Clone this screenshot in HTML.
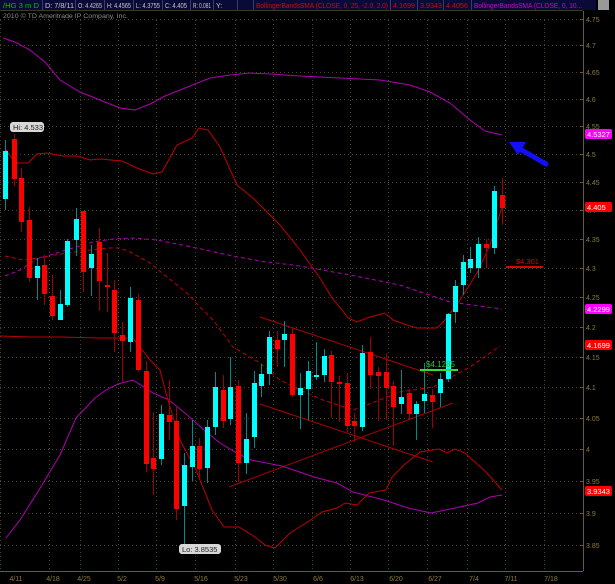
<!DOCTYPE html>
<html><head><meta charset="utf-8"><style>
html,body{margin:0;padding:0;background:#000;width:615px;height:584px;overflow:hidden}
svg{display:block}
text{font-family:"Liberation Sans",sans-serif}
</style></head><body>
<svg id="s" width="615" height="584" viewBox="0 0 615 584" xmlns="http://www.w3.org/2000/svg">
<rect width="615" height="584" fill="#000"/>
<!-- header -->
<rect x="0" y="0" width="596" height="10" fill="#0a0a38"/>
<line x1="0" y1="10.5" x2="583" y2="10.5" stroke="#3a3a20"/>
<g font-size="7">
<text x="3" y="8" fill="#00c000" textLength="36" lengthAdjust="spacingAndGlyphs">/HG 3 m D</text>
<text x="45" y="8" fill="#c8c8c8" textLength="29" lengthAdjust="spacingAndGlyphs">D: 7/8/11</text>
<text x="78" y="8" fill="#c8c8c8" textLength="24" lengthAdjust="spacingAndGlyphs">O: 4.4265</text>
<text x="107" y="8" fill="#c8c8c8" textLength="24" lengthAdjust="spacingAndGlyphs">H: 4.4565</text>
<text x="136" y="8" fill="#c8c8c8" textLength="24" lengthAdjust="spacingAndGlyphs">L: 4.3755</text>
<text x="165" y="8" fill="#c8c8c8" textLength="22" lengthAdjust="spacingAndGlyphs">C: 4.405</text>
<text x="193" y="8" fill="#c8c8c8" textLength="18" lengthAdjust="spacingAndGlyphs">R: 0.081</text>
<text x="216" y="8" fill="#c8c8c8">Y:</text>
<text x="256" y="8" fill="#e00000" textLength="132" lengthAdjust="spacingAndGlyphs">BollingerBandsSMA (CLOSE, 0, 25, -2.0, 2.0)</text>
<text x="393" y="8" fill="#e00000" textLength="22" lengthAdjust="spacingAndGlyphs">4.1699</text>
<text x="420" y="8" fill="#e00000" textLength="22" lengthAdjust="spacingAndGlyphs">3.9343</text>
<text x="446" y="8" fill="#e00000" textLength="22" lengthAdjust="spacingAndGlyphs">4.4056</text>
<text x="474" y="8" fill="#d000d0" textLength="108" lengthAdjust="spacingAndGlyphs">BollingerBandsSMA (CLOSE, 0, 10...</text>
</g>
<g stroke="#3a3a70" stroke-width="1">
<line x1="42.5" y1="0" x2="42.5" y2="10"/><line x1="75.5" y1="0" x2="75.5" y2="10"/><line x1="104.5" y1="0" x2="104.5" y2="10"/><line x1="133.5" y1="0" x2="133.5" y2="10"/><line x1="162.5" y1="0" x2="162.5" y2="10"/><line x1="190.5" y1="0" x2="190.5" y2="10"/><line x1="213.5" y1="0" x2="213.5" y2="10"/><line x1="237.5" y1="0" x2="237.5" y2="10"/><line x1="253.5" y1="0" x2="253.5" y2="10"/><line x1="390.5" y1="0" x2="390.5" y2="10"/><line x1="417.5" y1="0" x2="417.5" y2="10"/><line x1="443.5" y1="0" x2="443.5" y2="10"/><line x1="471.5" y1="0" x2="471.5" y2="10"/>
</g>
<rect x="598" y="0" width="11" height="10" fill="#999"/>
<text x="3" y="18" font-size="6.5" fill="#8a8a8a" textLength="125" lengthAdjust="spacingAndGlyphs">2010 © TD Ameritrade IP Company, Inc.</text>
<g id="grid" stroke="#4a4220" stroke-width="1" stroke-dasharray="1,3"></g>
<!-- axes -->
<line x1="583.5" y1="11" x2="583.5" y2="571" stroke="#6b5a2a"/>
<line x1="0" y1="571.5" x2="583" y2="571.5" stroke="#6b5a2a"/>
<g id="ylab" font-size="7" fill="#8a7a40"></g>
<g font-size="7" fill="#8a7a40" text-anchor="middle">
<text x="16" y="581">4/11</text><text x="53" y="581">4/18</text><text x="84" y="581">4/25</text><text x="122" y="581">5/2</text><text x="160" y="581">5/9</text><text x="201" y="581">5/16</text><text x="241" y="581">5/23</text><text x="280" y="581">5/30</text><text x="318" y="581">6/6</text><text x="357" y="581">6/13</text><text x="396" y="581">6/20</text><text x="435" y="581">6/27</text><text x="474" y="581">7/4</text><text x="511" y="581">7/11</text><text x="551" y="581">7/18</text>
</g>
<!-- bands -->
<g fill="none" stroke-width="1">
<polyline stroke="#b000b0" points="3,38 15,42 30,50 45,62 60,80 80,92 100,100 120,108 135,110 150,104 165,96 180,90 195,84 210,78 230,75 250,73 270,74 300,76 340,78 380,80 410,85 430,92 450,103 470,120 485,131 502,135"/>
<polyline stroke="#b000b0" points="6,538 20,520 39,490 60,455 76,418 95,398 106,390 118,384 133,380 153,393 169,400 186,414 204,430 220,443 235,452 251,460 282,466 314,477 337,483 353,492 384,500 408,508 431,513 455,508 478,503 490,497 502,495"/>
<polyline stroke="#b000b0" stroke-dasharray="4,3" points="5,276 20,270 37,259 63,251 93,242 113,239 133,238 157,240 187,246 233,256 260,261 300,266 350,275 400,285 450,302 502,309"/>
<polyline stroke="#c00000" points="5,148 15,163 28,163 37,154 47,153 63,156 77,156 90,160 100,159 122,161 137,168 153,174 162,172 177,145 192,138 199,128 208,130 220,147 237,185 253,198 260,205 280,225 300,250 320,278 332,298 342,310 348,318 357,322 370,317 385,313 393,320 407,325 417,328 437,328 445,320 460,300 477,273 490,245 502,207"/>
<polyline stroke="#c00000" points="0,336 30,337 60,337 100,338 120,338 133,338 150,360 160,370 167,397 180,440 196,470 212,510 224,527 239,527 255,537 265,545 275,548 290,533 306,523 322,512 337,508 345,503 357,505 369,493 386,490 392,477 404,465 420,452 439,449 447,453 455,449 465,453 486,472 502,490"/>
<polyline stroke="#c00000" stroke-dasharray="4,3" points="5,256 23,260 43,257 67,253 107,248 120,248 130,252 150,263 167,277 187,293 200,307 213,320 233,347 260,363 280,380 300,390 323,400 353,410 367,405 400,392 433,387 470,367 500,346"/>
<line x1="260" y1="317" x2="433" y2="375" stroke="#b00000"/>
<line x1="260" y1="404" x2="433" y2="462" stroke="#b00000"/>
<line x1="229" y1="487" x2="453" y2="403" stroke="#b00000"/>
</g>
<g id="candles"></g>
<!-- annotations -->
<line x1="420" y1="370" x2="458" y2="370" stroke="#30e030" stroke-width="2"/>
<text x="426" y="367" font-size="8" fill="#30c030">$4.1285</text>
<line x1="506" y1="267" x2="543" y2="267" stroke="#e00000" stroke-width="2"/>
<text x="516" y="264" font-size="7.5" fill="#e00000">$4.301</text>
<line x1="546" y1="164" x2="520" y2="149" stroke="#1010ff" stroke-width="5" stroke-linecap="round"/>
<polygon points="509,142 526,142 518,155" fill="#1010ff"/>
<rect x="10" y="122" width="34" height="10" rx="3" fill="#d8d8d8"/>
<text x="13" y="130" font-size="7.5" fill="#222">Hi: 4.533</text>
<rect x="179" y="544" width="42" height="10" rx="3" fill="#d8d8d8"/>
<text x="182" y="552" font-size="7.5" fill="#222">Lo: 3.8535</text>
<g font-size="7.5" fill="#fff">
<rect x="585" y="129" width="27" height="10" rx="2" fill="#ff00ff"/><text x="587" y="137">4.5327</text>
<rect x="585" y="202" width="27" height="10" rx="2" fill="#ff0000"/><text x="587" y="210">4.405</text>
<rect x="585" y="304" width="27" height="10" rx="2" fill="#ff00ff"/><text x="587" y="312">4.2299</text>
<rect x="585" y="340" width="27" height="10" rx="2" fill="#ff0000"/><text x="587" y="348">4.1699</text>
<rect x="585" y="486" width="27" height="10" rx="2" fill="#ff0000"/><text x="587" y="494">3.9343</text>
</g>
</svg>
<script>
var NS="http://www.w3.org/2000/svg";
function el(p,n,a){var e=document.createElementNS(NS,n);for(var k in a)e.setAttribute(k,a[k]);p.appendChild(e);return e;}
var g=document.getElementById('grid'),yl=document.getElementById('ylab');
var levels=[4.75,4.7,4.65,4.6,4.55,4.5,4.45,4.4,4.35,4.3,4.25,4.2,4.15,4.1,4.05,4.0,3.95,3.9,3.85];
levels.forEach(function(p){var y=Math.round(154-2506*Math.log(p/4.5))+0.5;
 el(g,'line',{x1:0,y1:y,x2:583,y2:y});
 el(g,'line',{x1:580,y1:y,x2:583,y2:y,stroke:'#6b5a2a','stroke-dasharray':'none'});
 var t=el(yl,'text',{x:586,y:y+2.5});t.textContent=String(p);});
[0,49,80,118,156,195,235,273,312,350,388,427,467,505,544].forEach(function(x){el(g,'line',{x1:x+.5,y1:20,x2:x+.5,y2:571});});
var C=[[5,151,199,140,210,1],[14,139,179,134,186,0],[21,178,222,168,232,0],[29,220,278,207,282,0],[37,266,278,258,300,1],[44,265,294,255,305,0],[52,296,316,275,320,0],[60,304,320,290,320,1],[67,241,305,239,307,1],[76,219,240,208,256,1],[83,211,272,211,292,0],[91,254,268,245,296,1],[99,242,281,228,311,0],[107,285,287,253,312,0],[114,290,333,280,352,0],[122,335,341,322,382,0],[130,298,342,287,352,1],[138,300,370,294,372,0],[146,371,464,361,472,0],[153,458,469,412,495,0],[161,414,459,405,465,1],[169,415,422,380,440,0],[176,421,509,407,520,0],[184,465,506,453,545,1],[192,446,467,420,481,1],[199,446,469,438,480,0],[207,427,468,420,483,1],[215,387,427,372,435,1],[223,390,421,375,428,0],[230,387,419,357,425,1],[238,386,463,380,482,0],[246,439,463,413,474,1],[254,383,437,371,448,1],[261,374,386,364,397,1],[269,337,374,331,385,1],[277,340,349,331,367,0],[284,334,340,321,367,1],[292,334,395,327,397,0],[300,388,395,373,429,1],[308,371,389,361,420,1],[316,375,377,342,380,1],[324,356,375,349,382,1],[331,355,382,351,418,0],[339,382,384,376,422,0],[347,383,426,373,432,0],[354,421,426,413,442,0],[362,353,427,345,431,1],[370,352,375,337,389,0],[378,372,376,367,421,0],[386,372,388,353,420,0],[393,386,407,381,446,0],[401,397,404,370,414,1],[409,393,414,389,420,0],[416,404,414,401,440,1],[424,394,401,363,413,1],[432,395,402,389,428,0],[440,379,393,373,407,1],[448,314,379,313,382,1],[455,286,312,280,323,1],[463,262,285,255,295,1],[470,259,268,247,273,1],[478,244,268,237,278,1],[486,244,248,239,268,0],[494,191,248,186,254,1],[502,195,208,178,225,0]];
var cg=document.getElementById('candles');
C.forEach(function(c){var up=c[5];
 el(cg,'line',{x1:c[0]+.5,y1:c[3],x2:c[0]+.5,y2:c[4],stroke:up?'#008a8a':'#a00000'});
 var h=Math.max(2,c[2]-c[1]);
 el(cg,'rect',{x:c[0]-2,y:c[1],width:5,height:h,fill:up?'#00ffff':'#ff0000'});});
</script>
</body></html>
